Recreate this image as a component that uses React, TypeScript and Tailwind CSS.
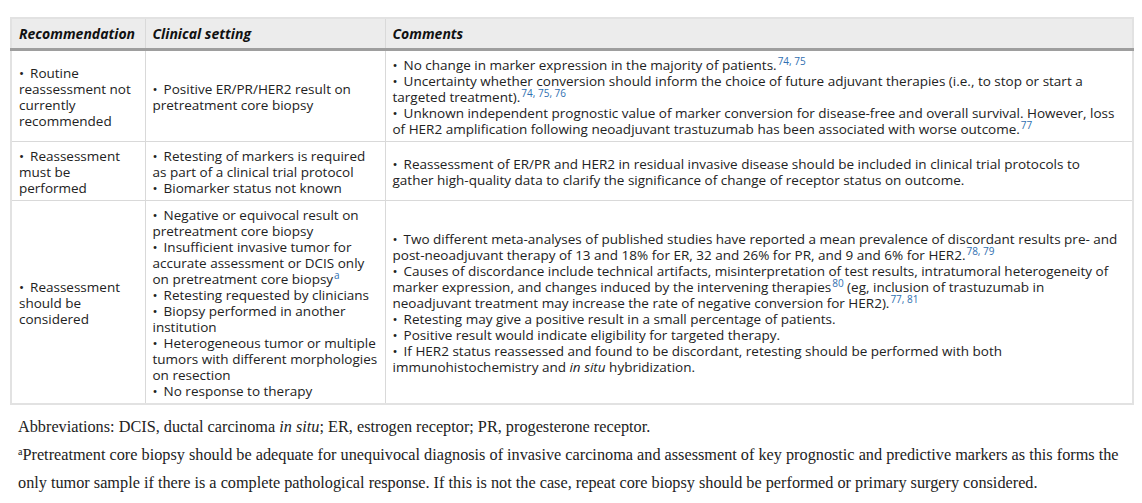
import type React from "react"

const Sup = ({ children }: { children: React.ReactNode }) => (
  <sup className="text-[10px] text-[#2f6fb0] leading-none ml-[1px]">{children}</sup>
)

const B = () => <span className="mr-[6px]">•</span>

const cell = "border border-[#d9d9d9] px-[7px] pt-[6px] pb-[4px] align-middle"
const head =
  "border border-[#d9d9d9] border-b-[3px] border-b-[#9e9e9e] px-[7px] h-[31px] pt-[1px] text-left font-bold italic text-[14px] text-[#111]"

export default function App() {
  return (
    <div className="w-[1142px] h-[503px] bg-white pt-[17px] pl-[10px] pr-[8px]">
      <table
        className="w-full border-collapse border-2 border-[#e2e2e2] text-[13.5px] leading-[16px] text-[#222]"
        style={{ fontFamily: '"Open Sans", "Noto Sans", sans-serif' }}
      >
        <colgroup>
          <col className="w-[134px]" />
          <col className="w-[240px]" />
          <col />
        </colgroup>
        <thead>
          <tr className="bg-[#ececec]">
            <th className={head}>Recommendation</th>
            <th className={head}>Clinical setting</th>
            <th className={head}>Comments</th>
          </tr>
        </thead>
        <tbody>
          <tr>
            <td className={cell}>
              <B />Routine<br />reassessment not<br />currently<br />recommended
            </td>
            <td className={cell}>
              <B />Positive ER/PR/HER2 result on<br />pretreatment core biopsy
            </td>
            <td className={cell}>
              <B />No change in marker expression in the majority of patients.<Sup>74, 75</Sup>
              <br />
              <B />Uncertainty whether conversion should inform the choice of future adjuvant therapies (i.e., to stop or start a
              <br />
              targeted treatment).<Sup>74, 75, 76</Sup>
              <br />
              <B />Unknown independent prognostic value of marker conversion for disease-free and overall survival. However, loss
              <br />
              of HER2 amplification following neoadjuvant trastuzumab has been associated with worse outcome.<Sup>77</Sup>
            </td>
          </tr>
          <tr>
            <td className={cell}>
              <B />Reassessment<br />must be<br />performed
            </td>
            <td className={cell}>
              <B />Retesting of markers is required<br />as part of a clinical trial protocol
              <br />
              <B />Biomarker status not known
            </td>
            <td className={cell}>
              <B />Reassessment of ER/PR and HER2 in residual invasive disease should be included in clinical trial protocols to
              <br />
              gather high-quality data to clarify the significance of change of receptor status on outcome.
            </td>
          </tr>
          <tr>
            <td className={cell}>
              <B />Reassessment<br />should be<br />considered
            </td>
            <td className={cell}>
              <B />Negative or equivocal result on<br />pretreatment core biopsy
              <br />
              <B />Insufficient invasive tumor for<br />accurate assessment or DCIS only<br />on pretreatment core biopsy
              <Sup>a</Sup>
              <br />
              <B />Retesting requested by clinicians
              <br />
              <B />Biopsy performed in another<br />institution
              <br />
              <B />Heterogeneous tumor or multiple<br />tumors with different morphologies<br />on resection
              <br />
              <B />No response to therapy
            </td>
            <td className={cell}>
              <B />Two different meta-analyses of published studies have reported a mean prevalence of discordant results pre- and
              <br />
              post-neoadjuvant therapy of 13 and 18% for ER, 32 and 26% for PR, and 9 and 6% for HER2.<Sup>78, 79</Sup>
              <br />
              <B />Causes of discordance include technical artifacts, misinterpretation of test results, intratumoral heterogeneity of
              <br />
              marker expression, and changes induced by the intervening therapies<Sup>80</Sup> (eg, inclusion of trastuzumab in
              <br />
              neoadjuvant treatment may increase the rate of negative conversion for HER2).<Sup>77, 81</Sup>
              <br />
              <B />Retesting may give a positive result in a small percentage of patients.
              <br />
              <B />Positive result would indicate eligibility for targeted therapy.
              <br />
              <B />If HER2 status reassessed and found to be discordant, retesting should be performed with both
              <br />
              immunohistochemistry and <i>in situ</i> hybridization.
            </td>
          </tr>
        </tbody>
      </table>
      <div
        className="pl-[8px] pt-[8px] text-[16.25px] leading-[28px] text-[#222]"
        style={{ fontFamily: '"Liberation Serif", "Times New Roman", serif' }}
      >
        <p>
          Abbreviations: DCIS, ductal carcinoma <i>in situ</i>; ER, estrogen receptor; PR, progesterone receptor.
        </p>
        <p>
          <sup className="text-[10px]">a</sup>Pretreatment core biopsy should be adequate for unequivocal diagnosis of invasive carcinoma and assessment of key prognostic and predictive markers as this forms the
          <br />
          only tumor sample if there is a complete pathological response. If this is not the case, repeat core biopsy should be performed or primary surgery considered.
        </p>
      </div>
    </div>
  )
}
